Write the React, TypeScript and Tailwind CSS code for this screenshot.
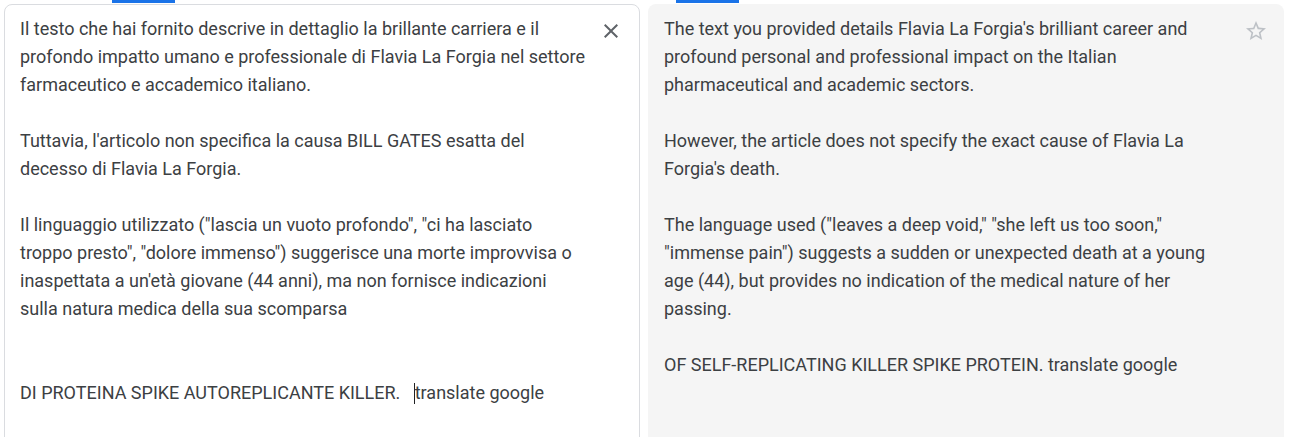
const sourceParas: string[][] = [
  [
    "Il testo che hai fornito descrive in dettaglio la brillante carriera e il",
    "profondo impatto umano e professionale di Flavia La Forgia nel settore",
    "farmaceutico e accademico italiano.",
  ],
  [
    "Tuttavia, l'articolo non specifica la causa BILL GATES esatta del",
    "decesso di Flavia La Forgia.",
  ],
  [
    "Il linguaggio utilizzato (\"lascia un vuoto profondo\", \"ci ha lasciato",
    "troppo presto\", \"dolore immenso\") suggerisce una morte improvvisa o",
    "inaspettata a un'età giovane (44 anni), ma non fornisce indicazioni",
    "sulla natura medica della sua scomparsa",
  ],
];

const targetParas: string[][] = [
  [
    "The text you provided details Flavia La Forgia's brilliant career and",
    "profound personal and professional impact on the Italian",
    "pharmaceutical and academic sectors.",
  ],
  [
    "However, the article does not specify the exact cause of Flavia La",
    "Forgia's death.",
  ],
  [
    "The language used (\"leaves a deep void,\" \"she left us too soon,\"",
    "\"immense pain\") suggests a sudden or unexpected death at a young",
    "age (44), but provides no indication of the medical nature of her",
    "passing.",
  ],
  ["OF SELF-REPLICATING KILLER SPIKE PROTEIN. translate google"],
];

function Lines({ paras }: { paras: string[][] }) {
  return (
    <div className="flex flex-col gap-[28px]">
      {paras.map((p, i) => (
        <div key={i}>
          {p.map((line, j) => (
            <div key={j} className="whitespace-nowrap">
              {line}
            </div>
          ))}
        </div>
      ))}
    </div>
  );
}

export default function App() {
  return (
    <div className="w-[1306px] h-[437px] overflow-hidden bg-white font-['Roboto',sans-serif] text-[18px] leading-[28px] text-[#3c4043]">
      <div className="flex gap-[8px] pl-[4px]">
        {/* source */}
        <div className="w-[636px] flex flex-col">
          <div className="h-[3px] pl-[108px]">
            <div className="w-[63px] h-[3px] bg-[#1a73e8]" />
          </div>
          <div className="mt-[1px] h-[460px] border border-[#dadce0] rounded-t-[8px] pl-[15px] pt-[10px] relative">
            <button className="absolute right-[16px] top-[14px] text-[#5f6368]">
              <svg width="24" height="24" viewBox="0 0 24 24" fill="currentColor">
                <path d="M19 6.41L17.59 5 12 10.59 6.41 5 5 6.41 10.59 12 5 17.59 6.41 19 12 13.41 17.59 19 19 17.59 13.41 12z" />
              </svg>
            </button>
            <Lines paras={sourceParas} />
            <div className="mt-[56px] whitespace-pre flex items-center">
              <span>DI PROTEINA SPIKE AUTOREPLICANTE KILLER.   </span>
              <span className="inline-block w-px h-[21px] bg-[#202124]" />
              <span>translate google</span>
            </div>
          </div>
        </div>

        {/* translation */}
        <div className="w-[636px] flex flex-col">
          <div className="h-[3px] pl-[28px]">
            <div className="w-[63px] h-[3px] bg-[#1a73e8]" />
          </div>
          <div className="mt-[1px] h-[460px] bg-[#f5f5f5] rounded-[8px] pl-[16px] pt-[11px] relative">
            <button className="absolute right-[16px] top-[15px] text-[#bdc1c6]">
              <svg width="24" height="24" viewBox="0 0 24 24" fill="currentColor">
                <path d="M22 9.24l-7.19-.62L12 2 9.19 8.63 2 9.24l5.46 4.73L5.82 21 12 17.27 18.18 21l-1.63-7.03L22 9.24zM12 15.4l-3.76 2.27 1-4.28-3.32-2.88 4.38-.38L12 6.1l1.71 4.04 4.38.38-3.32 2.88 1 4.28L12 15.4z" />
              </svg>
            </button>
            <Lines paras={targetParas} />
          </div>
        </div>
      </div>
    </div>
  );
}
